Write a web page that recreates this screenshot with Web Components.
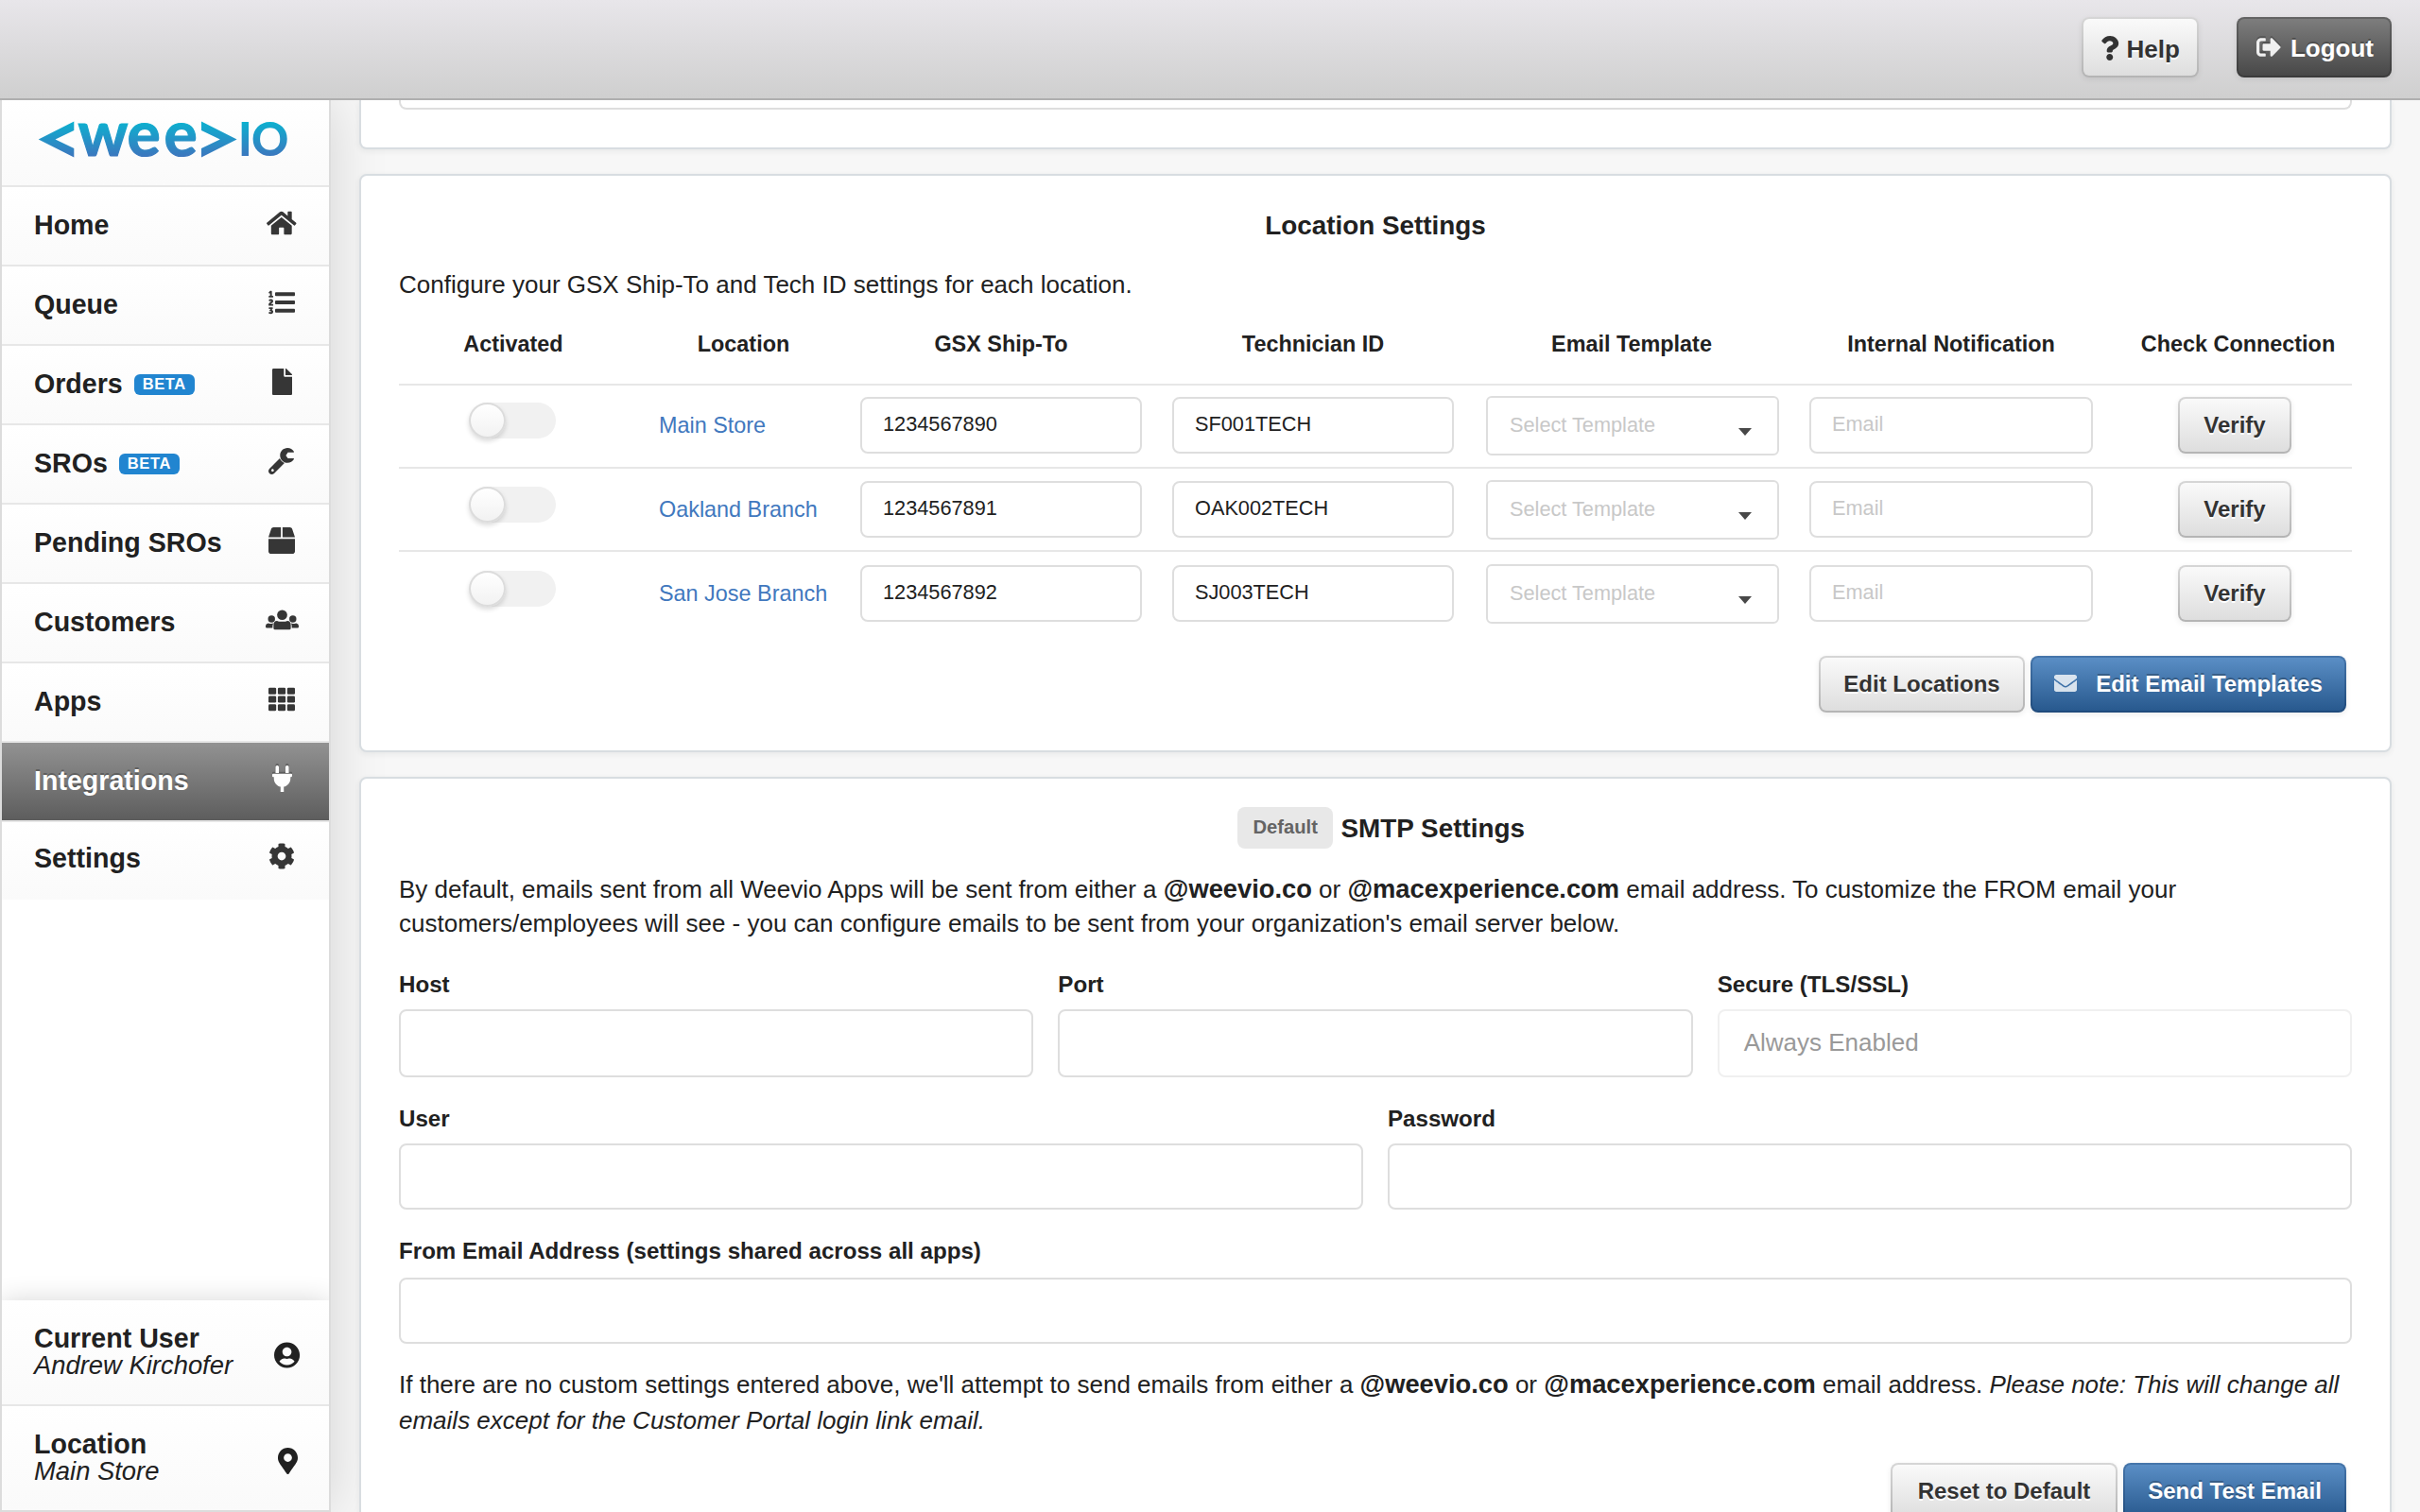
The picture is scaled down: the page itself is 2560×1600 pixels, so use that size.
<!DOCTYPE html>
<html lang="en">
<head>
<meta charset="UTF-8">
<title>Weevio - Integrations</title>
<style>
    html, body {
        margin: 0;
        height: 1600px;
        overflow: hidden;
    }

    body {
        background: #f7f7f7;
        color: #212121;
        font-family: "Liberation Sans", Arial, Helvetica, sans-serif;
        font-size: 26px;
        line-height: 36.4px;
    }
</style>
</head>
<body>
<weevio-app></weevio-app>

<script>
// Icon shapes. Each entry: [width, height, markup]
const ICONS = {
    home: [576, 512, '<path d="M488 312.7V456c0 13.3-10.7 24-24 24H348c-6.600 0-12-5.400-12-12V356c0-6.600-5.400-12-12-12h-72c-6.600 0-12 5.400-12 12v112c0 6.600-5.400 12-12 12H112c-13.300 0-24-10.700-24-24V312.700c0-3.600 1.600-7 4.400-9.300l188-154.800c4.400-3.600 10.800-3.600 15.300 0l188 154.800c2.700 2.300 4.300 5.700 4.300 9.300zm83.600-60.900L488 182.900V44.400c0-6.600-5.400-12-12-12h-56c-6.600 0-12 5.400-12 12V117l-89.500-73.700c-17.700-14.600-43.300-14.600-61 0L4.400 251.800c-5.100 4.200-5.800 11.800-1.600 16.900l25.500 31c4.200 5.100 11.800 5.800 16.900 1.600l235.200-193.700c4.400-3.600 10.800-3.600 15.300 0l235.200 193.700c5.100 4.200 12.700 3.500 16.900-1.600l25.500-31c4.200-5.200 3.400-12.700-1.700-16.900z"/>'],
    list: [512, 512, '<path d="M3.263 139.527c0-7.477 3.917-11.572 11.573-11.572h15.131V88.078c0-5.163.534-10.503.534-10.503h-.356s-1.779 2.670-2.848 3.738c-4.451 4.273-10.504 4.451-15.666-1.068l-5.518-6.231c-5.342-5.341-4.984-11.216.534-16.379l21.720-19.938C32.815 33.602 36.732 32 42.785 32H54.890c7.656 0 11.749 3.916 11.749 11.572v84.384h15.488c7.655 0 11.572 4.094 11.572 11.572v8.901c0 7.477-3.917 11.572-11.572 11.572H14.836c-7.656 0-11.573-4.095-11.573-11.572v-8.902zM2.211 304.591c0-47.278 50.955-56.383 50.955-69.165 0-7.180-5.954-8.755-9.280-8.755-3.153 0-6.479 1.051-9.455 3.852-5.079 4.903-10.507 7.004-16.111 2.451l-8.579-6.829c-5.779-4.553-7.180-9.805-2.803-15.409C13.592 201.981 26.025 192 47.387 192c19.437 0 44.476 10.506 44.476 39.573 0 38.347-46.753 46.402-48.679 56.909h39.049c7.529 0 11.557 4.027 11.557 11.382v8.755c0 7.354-4.028 11.382-11.557 11.382h-67.940c-7.005 0-12.083-4.028-12.083-11.382v-4.028zM5.654 454.610l5.603-9.280c3.853-6.654 9.105-7.004 15.584-3.152 4.903 2.101 9.630 3.152 14.359 3.152 10.155 0 14.358-3.502 14.358-8.230 0-6.654-5.604-9.106-15.934-9.106h-4.728c-5.954 0-9.280-2.101-12.258-7.880l-1.050-1.926c-2.451-4.728-1.226-9.806 2.801-14.884l5.604-7.004c6.829-8.405 12.257-13.483 12.257-13.483v-.350s-4.203 1.051-12.608 1.051H16.685c-7.530 0-11.383-4.028-11.383-11.382v-8.755c0-7.530 3.853-11.382 11.383-11.382h58.484c7.529 0 11.382 4.027 11.382 11.382v3.327c0 5.778-1.401 9.806-5.079 14.183l-17.509 20.137c19.611 5.078 28.716 20.487 28.716 34.845 0 21.363-14.358 44.126-48.503 44.126-16.636 0-28.192-4.728-35.896-9.455-5.779-4.202-6.304-9.805-2.626-15.934z"/><rect x="128" y="60" width="384" height="72" rx="16"/><rect x="128" y="220" width="384" height="72" rx="16"/><rect x="128" y="380" width="384" height="72" rx="16"/>'],
    file: [384, 512, '<path d="M224 136V0H24C10.700 0 0 10.700 0 24v464c0 13.300 10.700 24 24 24h336c13.300 0 24-10.700 24-24V160H248c-13.200 0-24-10.800-24-24zm160-14.100v6.100H256V0h6.100c6.400 0 12.500 2.500 17 7l97.900 98c4.500 4.500 7 10.600 7 16.900z"/>'],
    wrench: [512, 512, '<path d="M481.156 200c9.300 0 15.120 10.155 10.325 18.124C466.295 259.992 420.419 288 368 288c-79.222 0-143.501-63.974-143.997-143.079C223.505 65.469 288.548 0 368.002 0c52.362 0 98.196 27.949 123.400 69.743C496.240 77.766 490.523 88 481.154 88H376l-40 56 40 56h105.156zm-171.649 93.003L109.255 493.255c-24.994 24.993-65.515 24.994-90.510 0-24.993-24.994-24.993-65.516 0-90.510L218.991 202.500c16.160 41.197 49.303 74.335 90.516 90.503zM104 432c0-13.255-10.745-24-24-24s-24 10.745-24 24 10.745 24 24 24 24-10.745 24-24z"/>'],
    box: [512, 512, '<path d="M509.500 184.600L458.900 32.800C452.400 13.200 434.100 0 413.400 0H272v192h238.700c-.400-2.500-.400-5-1.200-7.400zM240 0H98.600c-20.700 0-39 13.200-45.500 32.800L2.500 184.600c-.800 2.400-.800 4.900-1.200 7.400H240V0zM0 224v240c0 26.500 21.500 48 48 48h416c26.500 0 48-21.500 48-48V224H0z"/>'],
    users: [640, 512, '<circle cx="320" cy="160" r="98"/><circle cx="114" cy="236" r="68"/><circle cx="526" cy="236" r="68"/><path d="M222 273C262 296 378 296 418 273C465 275 487 306 487 346V415Q487 443 459 443H181Q153 443 153 415V346C153 306 175 275 222 273ZM50 318Q114 342 150 322Q134 350 134 378V411H24Q0 411 0 387V370Q0 328 50 318ZM590 318Q526 342 490 322Q506 350 506 378V411H616Q640 411 640 387V370Q640 328 590 318Z"/>'],
    grid: [512, 512, [32, 192, 352].map(y => [0, 181.3, 362.6].map(x => `<rect x="${x}" y="${y}" width="149.300" height="128" rx="24"/>`).join('')).join('')],
    plug: [384, 512, '<path d="M256 144V32c0-17.673 14.327-32 32-32s32 14.327 32 32v112h-64zm112 16H16c-8.837 0-16 7.163-16 16v32c0 8.837 7.163 16 16 16h16v32c0 77.406 54.969 141.971 128 156.796V512h64v-99.204c73.031-14.825 128-79.390 128-156.796v-32h16c8.837 0 16-7.163 16-16v-32c0-8.837-7.163-16-16-16zm-240-16V32c0-17.673-14.327-32-32-32S64 14.327 64 32v112h64z"/>'],
    cog: [512, 512, '<path d="M444.788 291.100l42.616 24.599c4.867 2.809 7.126 8.618 5.459 13.985-11.070 35.642-29.970 67.842-54.689 94.586a12.016 12.016 0 0 1-14.832 2.254l-42.584-24.595a191.577 191.577 0 0 1-60.759 35.130v49.182a12.010 12.010 0 0 1-9.377 11.718c-34.956 7.850-72.499 8.256-109.219.007-5.490-1.233-9.403-6.096-9.403-11.723v-49.184a191.555 191.555 0 0 1-60.759-35.130l-42.584 24.595a12.016 12.016 0 0 1-14.832-2.254c-24.718-26.744-43.619-58.944-54.689-94.586-1.667-5.366.592-11.175 5.459-13.985L67.212 291.100a193.480 193.480 0 0 1 0-70.199l-42.616-24.599c-4.867-2.809-7.126-8.618-5.459-13.985 11.070-35.642 29.970-67.842 54.689-94.586a12.016 12.016 0 0 1 14.832-2.254l42.584 24.595a191.577 191.577 0 0 1 60.759-35.130V25.759a12.010 12.010 0 0 1 9.377-11.718c34.956-7.850 72.499-8.256 109.219-.007 5.490 1.233 9.403 6.096 9.403 11.723v49.184a191.555 191.555 0 0 1 60.759 35.130l42.584-24.595a12.016 12.016 0 0 1 14.832 2.254c24.718 26.744 43.619 58.944 54.689 94.586 1.667 5.366-.592 11.175-5.459 13.985L444.788 220.900a193.485 193.485 0 0 1 0 70.200zM336 256c0-44.112-35.888-80-80-80s-80 35.888-80 80 35.888 80 80 80 80-35.888 80-80z"/>'],
    user: [496, 512, '<path d="M248 8C111 8 0 119 0 256s111 248 248 248 248-111 248-248S385 8 248 8zm0 96c48.600 0 88 39.400 88 88s-39.400 88-88 88-88-39.400-88-88 39.400-88 88-88zm0 344c-58.700 0-111.300-26.600-146.500-68.200 18.800-35.400 55.600-59.800 98.500-59.800 2.400 0 4.800.400 7.100 1.100 13 4.200 26.600 6.900 40.900 6.900 14.300 0 28-2.700 40.900-6.900 2.300-.700 4.700-1.100 7.100-1.100 42.900 0 79.700 24.400 98.500 59.800C359.300 421.400 306.700 448 248 448z"/>'],
    marker: [384, 512, '<path d="M172.268 501.670C26.970 291.031 0 269.413 0 192 0 85.961 85.961 0 192 0s192 85.961 192 192c0 77.413-26.970 99.031-172.268 309.670-9.535 13.774-29.930 13.773-39.464 0zM192 272c44.183 0 80-35.817 80-80s-35.817-80-80-80-80 35.817-80 80 35.817 80 80 80z"/>'],
    question: [384, 512, '<path d="M202.021 0C122.202 0 70.503 32.703 29.914 91.026c-7.363 10.580-5.093 25.086 5.178 32.874l43.138 32.709c10.373 7.865 25.132 6.026 33.253-4.148 25.049-31.381 43.630-49.449 82.757-49.449 30.764 0 68.816 19.799 68.816 49.631 0 22.552-18.617 34.134-48.993 51.164-35.423 19.860-82.299 44.576-82.299 106.405V320c0 13.255 10.745 24 24 24h72.471c13.255 0 24-10.745 24-24v-5.773c0-42.860 125.268-44.645 125.268-160.627C377.504 66.256 286.902 0 202.021 0zM192 373.459c-38.196 0-69.271 31.075-69.271 69.271 0 38.195 31.075 69.270 69.271 69.270s69.271-31.075 69.271-69.271-31.075-69.270-69.271-69.270z"/>'],
    signout: [512, 512, '<path d="M497 273L329 441c-15 15-41 4.500-41-17v-96H152c-13.300 0-24-10.700-24-24v-96c0-13.300 10.700-24 24-24h136V88c0-21.400 25.900-32 41-17l168 168c9.300 9.400 9.300 24.600 0 34zM192 436v-40c0-6.600-5.400-12-12-12H96c-17.700 0-32-14.300-32-32V160c0-17.700 14.300-32 32-32h84c6.600 0 12-5.400 12-12V76c0-6.600-5.400-12-12-12H96c-53 0-96 43-96 96v192c0 53 43 96 96 96h84c6.600 0 12-5.400 12-12z"/>'],
    envelope: [512, 512, '<path d="M502.300 190.800c3.900-3.100 9.700-.200 9.700 4.700V400c0 26.500-21.500 48-48 48H48c-26.500 0-48-21.500-48-48V195.600c0-5 5.700-7.800 9.700-4.700 22.400 17.400 52.100 39.500 154.100 113.600 21.100 15.400 56.700 47.800 92.200 47.600 35.700.300 72-32.800 92.300-47.600 102-74.100 131.600-96.300 154-113.700zM256 320c23.200.400 56.600-29.200 73.400-41.400 132.700-96.300 142.800-104.700 173.400-128.700 5.800-4.500 9.200-11.500 9.200-18.900v-19c0-26.500-21.500-48-48-48H48c-26.500 0-48 21.500-48 48v19c0 7.400 3.400 14.300 9.200 18.900 30.600 23.900 40.700 32.400 173.400 128.700 16.800 12.200 50.200 41.800 73.400 41.400z"/>']
};

// Base class: attaches the shadow root and renders once
class BaseElement extends HTMLElement {
    constructor() {
        super();
        this.attachShadow({ mode: 'open' });
    }

    connectedCallback() {
        this.shadowRoot.innerHTML = this.render();
    }
}

// <ui-icon name="home" size="28">
class UiIcon extends BaseElement {
    render() {
        const size = Number(this.getAttribute('size')) || 28;
        const [w, h, shape] = ICONS[this.getAttribute('name')];
        return `
        <style>
            :host { display: block; flex: none; }
            svg { display: block; fill: currentColor; overflow: visible; }
        </style>
        <svg width="${w * size / 512}" height="${size}" viewBox="0 0 ${w} ${h}" aria-hidden="true">${shape}</svg>`;
    }
}

// <ui-button variant="dark|blue" icon="...">
class UiButton extends BaseElement {
    render() {
        const icon = this.getAttribute('icon');
        return `
        <style>
            :host {
                display: inline-block;
                --top: #fafafa; --bottom: #dedede;
                --edge-top: #d6d6d6; --edge-bottom: #b4b4b4;
                --glow: 0 2px 0 #fff;
                color: #333;
                font-size: 24px;
                font-weight: bold;
            }
            :host([variant="dark"]) {
                --top: #7d7d7d; --bottom: #484848;
                --edge-top: #646464; --edge-bottom: #3a3a3a;
                --glow: 0 -2px 0 rgba(0, 0, 0, .25);
                color: #fff;
            }
            :host([variant="blue"]) {
                --top: #5a8ec5; --bottom: #28598e;
                --edge-top: #4676ab; --edge-bottom: #1f4a7b;
                --glow: 0 -2px 0 rgba(0, 0, 0, .25);
                color: #fff;
            }
            button {
                display: flex;
                align-items: center;
                justify-content: center;
                gap: var(--gap, 20px);
                box-sizing: border-box;
                width: 100%;
                height: var(--height, 60px);
                padding: var(--pad, 0);
                border: 2px solid transparent;
                border-radius: 8px;
                background:
                    linear-gradient(var(--top), var(--bottom)) padding-box,
                    linear-gradient(var(--edge-top), var(--edge-bottom)) border-box;
                box-shadow: 0 2px 6px rgba(0, 0, 0, .08);
                color: inherit;
                font: inherit;
                line-height: 56px;
                white-space: nowrap;
                text-shadow: var(--glow);
            }
            ui-icon { filter: drop-shadow(var(--icon-glow, 0 0 0 transparent)); margin-top: var(--icon-shift, 0); opacity: var(--icon-opacity, 1); }
        </style>
        <button type="button">${icon ? `<ui-icon name="${icon}" size="${this.getAttribute('icon-size') || 24}"></ui-icon>` : ''}<span><slot></slot></span></button>`;
    }
}

// <text-field label="Host" disabled>value</text-field>
class TextField extends BaseElement {
    render() {
        const label = this.getAttribute('label');
        return `
        <style>
            :host { display: block; }
            label {
                display: block;
                margin-bottom: var(--label-gap, 8px);
                font-size: 24.140px;
                font-weight: bold;
                line-height: 36px;
            }
            .box {
                box-sizing: border-box;
                height: var(--height, 70px);
                padding-left: 26px;
                border: 2px solid #dedede;
                border-radius: 8px;
                background: #fff;
                line-height: calc(var(--height, 70px) - 6px);
                white-space: nowrap;
            }
            :host([disabled]) .box { border-color: #f0f0f0; color: #999; }
            :host([small]) .box {
                height: 60px;
                padding-left: 22px;
                font-size: 21.730px;
                line-height: 54px;
            }
            :host([placeholder]) .box { color: #c8c8c8; }
        </style>
        ${label ? `<label>${label}</label>` : ''}
        <div class="box"><slot></slot></div>`;
    }
}

class SelectField extends BaseElement {
    render() {
        return `
        <style>
            :host {
                display: flex;
                align-items: center;
                justify-content: space-between;
                box-sizing: border-box;
                height: 63px;
                padding: 0 27px 0 23px;
                border: 2px solid #dedede;
                border-radius: 6px;
                background: #fff;
                color: #c8c8c8;
                font-size: 21.730px;
            }
            i {
                margin-top: 13px;
                border: 7px solid transparent;
                border-top: 8px solid #484848;
                border-bottom: 0;
            }
        </style>
        <span><slot></slot></span><i></i>`;
    }
}

class ToggleSwitch extends BaseElement {
    render() {
        return `
        <style>
            :host {
                display: block;
                width: 92px;
                height: 38px;
                border-radius: 19px;
                background: #f1f1f1;
            }
            i {
                display: block;
                box-sizing: border-box;
                width: 39px;
                height: 38px;
                border: 2px solid #dcdcdc;
                border-radius: 50%;
                background: linear-gradient(#fff, #f2f2f2);
                box-shadow: 0 3px 5px rgba(0, 0, 0, .14);
            }
        </style>
        <i></i>`;
    }
}

class AppHeader extends BaseElement {
    render() {
        return `
        <style>
            :host {
                display: flex;
                justify-content: flex-end;
                align-items: flex-start;
                gap: 40px;
                box-sizing: border-box;
                height: 106px;
                padding: 18px 30px 0;
                border-bottom: 2px solid #afafaf;
                background: linear-gradient(#e8e6ea, #cfcfcf);
            }
            ui-button { font-size: 26px; --height: 64px; }
            .help { width: 124px; --gap: 8px; --pad: 4px 0 0; --icon-shift: -3px; }
            .logout { width: 164px; --gap: 10px; --pad: 2px 0 0 2px; --icon-shift: -3px; --icon-opacity: .9; --icon-glow: 0 -2px 0 rgba(0, 0, 0, .25); }
        </style>
        <ui-button class="help" icon="question" icon-size="26">Help</ui-button>
        <ui-button class="logout" variant="dark" icon="signout" icon-size="26">Logout</ui-button>`;
    }
}

class AppLogo extends BaseElement {
    render() {
        return `
        <style>
            :host { display: block; height: 90px; border-bottom: 2px solid #e7e7e7; background: linear-gradient(#fff, #fafafa); }
            svg { display: block; overflow: visible; }
            text { font-family: Lato, sans-serif; font-weight: bold; stroke: url(#brand); stroke-width: 1.2px; }
            .caps { font-weight: 900; stroke: none; }
        </style>
        <svg width="346" height="90" viewBox="2 106 346 90" role="img">
            <defs>
                <linearGradient id="brand" gradientUnits="userSpaceOnUse" x1="0" y1="128" x2="0" y2="168">
                    <stop offset="0" stop-color="#0bb2d0"/>
                    <stop offset="1" stop-color="#3f73bd"/>
                </linearGradient>
            </defs>
            <g fill="url(#brand)">
                <path d="M78.300 128.500V138L58.500 147.500L78.300 157V166.500L40.700 147.500ZM213 128.500V138L232.800 147.500L213 157V166.500L250.600 147.500Z"/>
                <text y="164.500" font-size="66"><tspan x="82.500">w</tspan><tspan x="134.500">e</tspan><tspan x="173.500">e</tspan></text>
                <text class="caps" y="165" font-size="48.500"><tspan x="252">I</tspan><tspan x="266">O</tspan></text>
            </g>
        </svg>`;
    }
}

// <nav-item icon="home" active beta>
class NavItem extends BaseElement {
    render() {
        return `
        <style>
            :host {
                display: flex;
                align-items: flex-start;
                box-sizing: border-box;
                height: 84px;
                padding: 0 32px 0 34px;
                border-bottom: 2px solid #e7e7e7;
                background: linear-gradient(#fff, #fafafa);
                font-size: 28.600px;
                font-weight: bold;
                line-height: 80px;
            }
            :host([active]) {
                background: linear-gradient(#929292, #5d5d5d) padding-box;
                color: #fff;
                text-shadow: 0 -2px 0 rgba(0, 0, 0, .25);
            }
            :host([last]) { height: 82px; border: 0; line-height: 76px; }
            :host([last]) .icon { margin-top: 22px; }
            b {
                width: 64px;
                height: 22px;
                margin: 30px 0 0 12px;
                border-radius: 6px;
                background: #2185d0;
                color: #fff;
                font-size: 16.500px;
                line-height: 21px;
                letter-spacing: .600px;
                text-align: center;
            }
            .icon {
                display: flex;
                justify-content: center;
                width: 36px;
                margin: 24px 0 0 auto;
                color: #363636;
            }
            :host([active]) .icon { color: #fff; filter: drop-shadow(0 -2px 0 rgba(0, 0, 0, .25)); }
        </style>
        <span><slot></slot></span>${this.hasAttribute('beta') ? '<b>BETA</b>' : ''}
        <span class="icon"><ui-icon name="${this.getAttribute('icon')}" size="28"></ui-icon></span>`;
    }
}

// Two-line entry at the foot of the sidebar
class AccountItem extends BaseElement {
    render() {
        return `
        <style>
            :host {
                display: flex;
                justify-content: space-between;
                box-sizing: border-box;
                height: 112px;
                padding: 26px 30px 0 34px;
                border-bottom: 2px solid #e7e7e7;
                background: linear-gradient(#fff, #fafafa);
                font-size: 28.600px;
                line-height: 28px;
            }
            strong, em { display: block; }
            em { padding-top: 1px; font-size: 27.400px; }
            .icon { display: flex; justify-content: center; width: 28px; margin-top: 18px; }
        </style>
        <div><strong>${this.getAttribute('label')}</strong><em><slot></slot></em></div>
        <span class="icon"><ui-icon name="${this.getAttribute('icon')}" size="28"></ui-icon></span>`;
    }
}

class AppSidebar extends BaseElement {
    render() {
        return `
        <style>
            :host {
                display: block;
                box-sizing: border-box;
                width: 350px;
                border: solid #dcdcdc;
                border-width: 0 2px;
                background: #fff;
                box-shadow: 0 0 56px rgba(0, 0, 0, .15);
            }
            nav { display: flex; flex-direction: column; height: 100%; }
            /* the shadow only shows above the footer */
            footer { margin-top: auto; box-shadow: 0 0 26px rgba(0, 0, 0, .16); clip-path: inset(-30px 0 0 0); }
            account-item:last-child { height: 112px; border-color: #dcdcdc; }
        </style>
        <nav>
            <app-logo></app-logo>
            <nav-item icon="home">Home</nav-item>
            <nav-item icon="list">Queue</nav-item>
            <nav-item icon="file" beta>Orders</nav-item>
            <nav-item icon="wrench" beta>SROs</nav-item>
            <nav-item icon="box">Pending SROs</nav-item>
            <nav-item icon="users">Customers</nav-item>
            <nav-item icon="grid">Apps</nav-item>
            <nav-item icon="plug" active>Integrations</nav-item>
            <nav-item icon="cog" last>Settings</nav-item>
            <footer>
                <account-item label="Current User" icon="user">Andrew Kirchofer</account-item>
                <account-item label="Location" icon="marker">Main Store</account-item>
            </footer>
        </nav>`;
    }
}

// White card with an optional heading slot
class UiPanel extends BaseElement {
    render() {
        return `
        <style>
            :host {
                display: block;
                box-sizing: border-box;
                padding: 0 40px;
                border: 2px solid #d8dde1;
                border-radius: 8px;
                background: #fff;
                box-shadow: 0 2px 6px rgba(34, 36, 38, .07);
            }
            header {
                display: flex;
                align-items: center;
                justify-content: center;
                height: 44px;
                padding-top: 30px;
                font-size: 27.860px;
                font-weight: bold;
                line-height: 38px;
            }
        </style>
        ${this.hasAttribute('headed') ? '<header><slot name="title"></slot></header>' : ''}
        <slot></slot>`;
    }
}

class LocationTable extends BaseElement {
    get rows() {
        return [
            ['Main Store', '1234567890', 'SF001TECH'],
            ['Oakland Branch', '1234567891', 'OAK002TECH'],
            ['San Jose Branch', '1234567892', 'SJ003TECH']
        ];
    }

    render() {
        const heads = ['Activated', 'Location', 'GSX Ship-To', 'Technician ID', 'Email Template', 'Internal Notification', 'Check Connection'];
        return `
        <style>
            :host { display: block; font-size: 23.400px; }
            .row {
                display: grid;
                grid-template-columns: 242px 230px 330px 330px 344px 332px 258px;
                align-items: center;
                box-sizing: border-box;
                height: 88px;
                border-top: 2px solid #e7e7e7;
            }
            .head + .row { padding-bottom: 2px; }
            .row:last-child { padding-top: 2px; }
            .head { height: 84px; border: 0; font-weight: bold; text-align: center; }
            .head span:nth-child(2) { padding-left: 15px; }
            .head span:nth-child(7) { padding-left: 17px; white-space: nowrap; }
            toggle-switch { margin: -10px 0 0 74px; }
            a { padding-left: 33px; color: #4178be; }
            text-field { margin: 0 16px; }
            select-field { margin: 0 16px 0 18px; }
            ui-button { width: 120px; margin-left: 74px; }
        </style>
        <div class="row head">${heads.map(h => `<span>${h}</span>`).join('')}</div>
        ${this.rows.map(([name, shipTo, tech]) => `
        <div class="row">
            <toggle-switch></toggle-switch>
            <a>${name}</a>
            <text-field small>${shipTo}</text-field>
            <text-field small>${tech}</text-field>
            <select-field>Select Template</select-field>
            <text-field small placeholder>Email</text-field>
            <ui-button>Verify</ui-button>
        </div>`).join('')}`;
    }
}

class WeevioApp extends BaseElement {
    render() {
        return `
        <style>
            :host { display: grid; grid-template: 106px 1494px / 350px 1fr; overflow: hidden; }
            app-header { grid-column: 1 / 3; z-index: 2; }
            main { overflow: hidden; padding: 0 30px; }
            app-sidebar { box-sizing: border-box; height: 1494px; }
            ui-panel { margin-bottom: 26px; }
            .previous { height: 52px; border-top: 0; border-radius: 0 0 8px 8px; }
            .previous div { height: 8px; border: 2px solid #dedede; border-top: 0; border-radius: 0 0 8px 8px; }
            .locations { height: 612px; }
            .smtp { height: 850px; }
            p { margin: 0; line-height: 36.400px; }
            p b { font-size: 27.300px; line-height: 1; }
            .intro { padding-top: 23px; }
            .smtp .intro { padding-top: 25px; }
            .tag {
                height: 44px;
                margin: 0 8px 0 12px;
                padding: 0 16.500px;
                border-radius: 8px;
                background: #e8e8e8;
                color: #646464;
                font-size: 20.200px;
                line-height: 42px;
            }
            .actions { display: flex; justify-content: flex-end; gap: 6px; padding-right: 6px; }
            .fields { display: grid; gap: 26px; }
            .three { grid-template-columns: repeat(3, 1fr); margin-top: 28px; --height: 72px; }
            .two { grid-template-columns: 1fr 1fr; }
            .fields + .fields { margin-top: 26px; }
            .from { --label-gap: 10px; }
            .note { margin-top: 24px; line-height: 38px; }
            .locations .actions { margin-top: 24px; }
            .smtp .actions { margin-top: 26px; }
            .mail { --icon-opacity: .8; --icon-shift: -2px; }
            .title { padding-top: 2px; }
        </style>
        <app-header></app-header>
        <app-sidebar></app-sidebar>
        <main>
            <ui-panel class="previous"><div></div></ui-panel>
            <ui-panel class="locations" headed>
                <span slot="title" class="title">Location Settings</span>
                <p class="intro">Configure your GSX Ship-To and Tech ID settings for each location.</p>
                <location-table style="margin-top:3px"></location-table>
                <div class="actions">
                    <ui-button style="width:218px">Edit Locations</ui-button>
                    <ui-button class="mail" style="width:334px" variant="blue" icon="envelope">Edit Email Templates</ui-button>
                </div>
            </ui-panel>
            <ui-panel class="smtp" headed>
                <span slot="title" class="tag">Default</span>
                <span slot="title" class="title">SMTP Settings</span>
                <p class="intro">By default, emails sent from all Weevio Apps will be sent from either a <b>@weevio.co</b> or <b>@macexperience.com</b> email address. To customize the FROM email your<br>customers/employees will see - you can configure emails to be sent from your organization's email server below.</p>
                <div class="fields three">
                    <text-field label="Host"></text-field>
                    <text-field label="Port"></text-field>
                    <text-field label="Secure (TLS/SSL)" disabled>Always Enabled</text-field>
                </div>
                <div class="fields two">
                    <text-field label="User"></text-field>
                    <text-field label="Password"></text-field>
                </div>
                <div class="fields from">
                    <text-field label="From Email Address (settings shared across all apps)"></text-field>
                </div>
                <p class="note">If there are no custom settings entered above, we'll attempt to send emails from either a <b>@weevio.co</b> or <b>@macexperience.com</b> email address. <em>Please note: This will change all<br>emails except for the Customer Portal login link email.</em></p>
                <div class="actions">
                    <ui-button style="width:240px">Reset to Default</ui-button>
                    <ui-button style="width:236px" variant="blue">Send Test Email</ui-button>
                </div>
            </ui-panel>
        </main>`;
    }
}

customElements.define('ui-icon', UiIcon);
customElements.define('ui-button', UiButton);
customElements.define('text-field', TextField);
customElements.define('select-field', SelectField);
customElements.define('toggle-switch', ToggleSwitch);
customElements.define('app-header', AppHeader);
customElements.define('app-logo', AppLogo);
customElements.define('nav-item', NavItem);
customElements.define('account-item', AccountItem);
customElements.define('app-sidebar', AppSidebar);
customElements.define('ui-panel', UiPanel);
customElements.define('location-table', LocationTable);
customElements.define('weevio-app', WeevioApp);
</script>
</body>
</html>
